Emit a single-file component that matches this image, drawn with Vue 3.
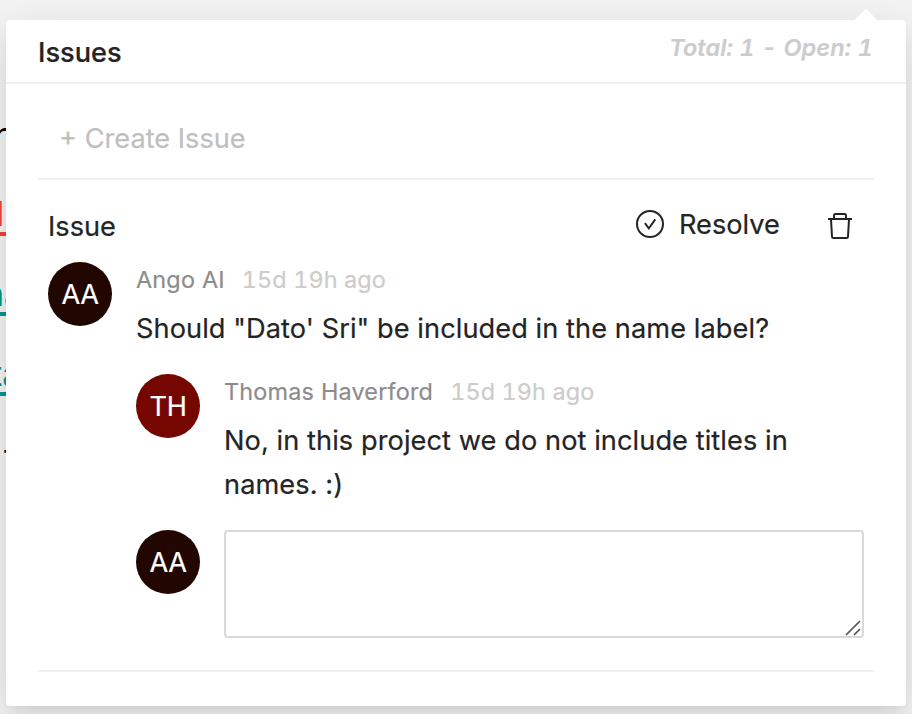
<script setup>
const me = { initials: 'AA', tone: 'dark' }
const thread = {
  author: 'Ango AI',
  time: '15d 19h ago',
  text: `Should "Dato' Sri" be included in the name label?`,
}
const reply = {
  author: 'Thomas Haverford',
  initials: 'TH',
  time: '15d 19h ago',
  text: 'No, in this project we do not include titles in names. :)',
}
</script>

<template>
  <div class="page">
    <div class="document" aria-hidden="true">
      <span class="fragment plain first">n</span>
      <span class="fragment red">l</span>
      <span class="fragment teal name">na</span>
      <span class="fragment teal state">ta</span>
      <span class="fragment plain last">-</span>
    </div>

    <section class="popover">
      <i class="arrow"></i>
      <header class="header">
        <h1 class="title">Issues</h1>
        <span class="summary">Total: 1 - Open: 1</span>
      </header>

      <div class="body">
        <div class="create"><button class="create-button">+ Create Issue</button></div>

        <article class="issue">
          <div class="issue-head">
            <span class="issue-name">Issue</span>
            <button class="resolve">
              <svg width="28" height="28" viewBox="0 0 28 28" fill="none" stroke="currentColor" stroke-width="2">
                <circle cx="14" cy="14" r="13" />
                <path d="M8.9 13.1l3.9 5.2 6.5-8.9" stroke-width="1.9" />
              </svg>
              <span class="resolve-label">Resolve</span>
            </button>
            <button class="remove" aria-label="Delete">
              <svg width="24" height="26" viewBox="0 0 24 26" fill="none" stroke="currentColor" stroke-width="2">
                <path d="M0 6h24" />
                <path d="M6 6V2.4Q6 1 7.4 1h9.2Q18 1 18 2.4V6" />
                <path d="M3 6l1 17.7Q4.1 25 5.4 25h13.2q1.3 0 1.4-1.3L21 6" />
              </svg>
            </button>
          </div>

          <div class="comment">
            <span class="avatar" :class="me.tone">{{ me.initials }}</span>
            <div class="content">
              <div class="meta">
                <span class="author">{{ thread.author }}</span>
                <span class="time">{{ thread.time }}</span>
              </div>
              <p class="text question">{{ thread.text }}</p>
            </div>
          </div>

          <div class="comment nested">
            <span class="avatar red-tone">{{ reply.initials }}</span>
            <div class="content">
              <div class="meta">
                <span class="author">{{ reply.author }}</span>
                <span class="time">{{ reply.time }}</span>
              </div>
              <p class="text answer">{{ reply.text }}</p>
            </div>
          </div>

          <div class="comment nested compose">
            <span class="avatar" :class="me.tone">{{ me.initials }}</span>
            <div class="field">
              <textarea class="input"></textarea>
              <svg class="grip" width="16" height="16" viewBox="0 0 16 16" fill="none" stroke="#555" stroke-width="1.7">
                <path d="M1 15L15 1M9 15l6-6" />
              </svg>
            </div>
          </div>
        </article>
      </div>
    </section>
  </div>
</template>

<style>
body {
  background: #f4f4f4;
}
</style>

<style scoped>
.page {
  position: relative;
  box-sizing: border-box;
  width: 912px;
  height: 714px;
  padding: 20px 6px 8px;
  overflow: hidden;
  background: #f4f4f4;
  color: #242424;
  font-family: Inter, "Liberation Sans", sans-serif;
  font-size: 27.2px;
  -webkit-text-stroke: 0.2px currentColor;
}

.document {
  opacity: 0.999;
}
.fragment {
  position: absolute;
  font-size: 34px;
  line-height: 40px;
  color: #000;
}
.first { left: -7px; top: 115px; font-size: 38px; }
.last { left: 2px; top: 430px; }
.red {
  left: -4px;
  top: 194px;
  width: 14px;
  height: 38px;
  color: #f44336;
  border-bottom: 4px solid #f44336;
}
.teal {
  color: #009688;
  border-bottom: 4px solid #009688;
}
.name { left: -16px; top: 274px; height: 38px; }
.state { left: -9px; top: 354px; height: 38px; }

.popover {
  position: relative;
  box-sizing: border-box;
  height: 686px;
  border-radius: 4px;
  background: #fff;
  box-shadow: 0 6px 12px -8px rgba(0, 0, 0, 0.12), 0 12px 32px rgba(0, 0, 0, 0.08),
    0 18px 56px 16px rgba(0, 0, 0, 0.05);
}
.arrow {
  position: absolute;
  top: -8px;
  right: 32px;
  width: 16px;
  height: 16px;
  background: #fff;
  transform: rotate(45deg);
}

.header {
  box-sizing: border-box;
  height: 64px;
  padding: 10px 33px 0 32px;
  display: flex;
  justify-content: space-between;
  border-bottom: 2px solid #f0f0f0;
}
.title {
  margin: 0;
  padding-top: 1px;
  font-size: 27.2px;
  font-weight: 540;
  line-height: 44px;
}
.summary {
  font-size: 23.5px;
  font-style: italic;
  font-weight: 600;
  line-height: 36px;
  font-variant-numeric: tabular-nums;
  letter-spacing: 0.1px;
  word-spacing: 0.2px;
  color: #ccc;
}

.body {
  padding: 24px 32px 0;
}
.create {
  box-sizing: border-box;
  height: 72px;
  padding: 9px 22px 0 21px;
  border-bottom: 2px solid #f0f0f0;
}
button {
  padding: 0;
  border: 0;
  background: none;
  color: inherit;
  font: inherit;
}
.create-button {
  display: block;
  line-height: 44px;
  color: #bfbfbf;
}

.issue {
  box-sizing: border-box;
  height: 492px;
  padding: 24px 10px 0;
  border-bottom: 2px solid #f0f0f0;
}
.issue-head {
  height: 58px;
  display: flex;
  align-items: flex-start;
}
.issue-name {
  flex: 1;
  padding-top: 1px;
  line-height: 44px;
}
.resolve {
  display: flex;
  align-items: center;
  gap: 15px;
  width: 145px;
  height: 40px;
  margin-right: 47px;
  white-space: nowrap;
}
.resolve svg {
  flex: none;
}
.remove {
  width: 24px;
  margin: 9px 12px 0 0;
  line-height: 0;
}

.comment {
  display: flex;
  gap: 24px;
  height: 112px;
}
.nested {
  margin-left: 88px;
  height: 156px;
}
.avatar {
  flex: none;
  width: 64px;
  height: 64px;
  border-radius: 50%;
  color: #fff;
  line-height: 65px;
  text-align: center;
  letter-spacing: -0.5px;
}
.dark { background: #220700; }
.red-tone { background: #760600; }

.meta {
  display: flex;
  gap: 17px;
  font-size: 23.4px;
  line-height: 36px;
  letter-spacing: 0.2px;
  white-space: nowrap;
}
.author { color: #8c8c8c; }
.time {
  color: #ccc;
  font-variant-numeric: tabular-nums;
  letter-spacing: 0.12px;
}
.text {
  margin: 9px 0 0;
  line-height: 44px;
  letter-spacing: 0.07px;
}
.question { white-space: nowrap; }
.field {
  position: relative;
  flex: 1;
  height: 108px;
}
.input {
  display: block;
  box-sizing: border-box;
  width: 100%;
  height: 108px;
  border: 2px solid #d9d9d9;
  border-radius: 4px;
  background: #fff;
  outline: none;
  resize: none;
}
.grip {
  position: absolute;
  right: 3px;
  bottom: 2px;
}
</style>
